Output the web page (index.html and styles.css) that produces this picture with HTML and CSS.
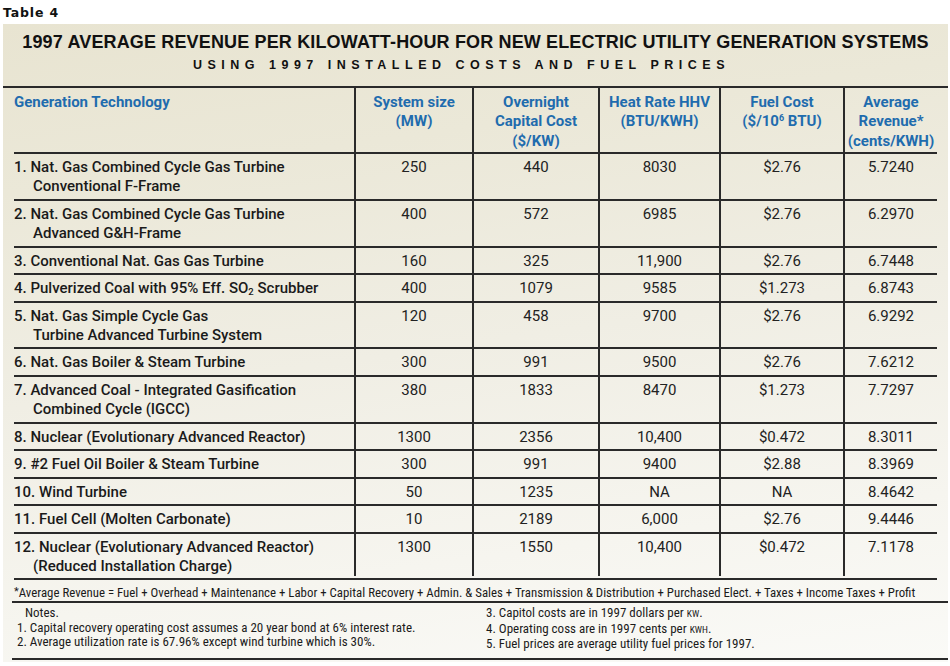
FILE: index.html
```html
<!DOCTYPE html>
<html>
<head>
<meta charset="utf-8">
<title>Table 4</title>
<link rel="stylesheet" href="styles.css">
</head>
<body>
<div class="label">Table 4</div>
<div class="panel">
  <h1 class="title">1997 AVERAGE REVENUE PER KILOWATT-HOUR FOR NEW ELECTRIC UTILITY GENERATION SYSTEMS</h1>
  <h2 class="subtitle">USING 1997 INSTALLED COSTS AND FUEL PRICES</h2>
  <div class="top-rule"></div>
  <div class="grid">
    <div class="row head">
      <div class="cell head-tech">Generation Technology</div>
      <div class="cell">System size<br>(MW)</div>
      <div class="cell">Overnight<br>Capital Cost<br>($/KW)</div>
      <div class="cell">Heat Rate HHV<br>(BTU/KWH)</div>
      <div class="cell">Fuel Cost<br>($/10<sup class="sup">6</sup> BTU)</div>
      <div class="cell">Average<br>Revenue*<br>(cents/KWH)</div>
    </div>
    <div class="row">
      <div class="cell tech">1. Nat. Gas Combined Cycle Gas Turbine<br>Conventional F-Frame</div>
      <div class="cell num">250</div><div class="cell num">440</div><div class="cell num">8030</div><div class="cell num">$2.76</div><div class="cell num">5.7240</div>
    </div>
    <div class="row">
      <div class="cell tech">2. Nat. Gas Combined Cycle Gas Turbine<br>Advanced G&amp;H-Frame</div>
      <div class="cell num">400</div><div class="cell num">572</div><div class="cell num">6985</div><div class="cell num">$2.76</div><div class="cell num">6.2970</div>
    </div>
    <div class="row">
      <div class="cell tech">3. Conventional Nat. Gas Gas Turbine</div>
      <div class="cell num">160</div><div class="cell num">325</div><div class="cell num">11,900</div><div class="cell num">$2.76</div><div class="cell num">6.7448</div>
    </div>
    <div class="row">
      <div class="cell tech">4. Pulverized Coal with 95% Eff. SO<sub class="sub">2</sub> Scrubber</div>
      <div class="cell num">400</div><div class="cell num">1079</div><div class="cell num">9585</div><div class="cell num">$1.273</div><div class="cell num">6.8743</div>
    </div>
    <div class="row">
      <div class="cell tech">5. Nat. Gas Simple Cycle Gas<br>Turbine Advanced Turbine System</div>
      <div class="cell num">120</div><div class="cell num">458</div><div class="cell num">9700</div><div class="cell num">$2.76</div><div class="cell num">6.9292</div>
    </div>
    <div class="row">
      <div class="cell tech">6. Nat. Gas Boiler &amp; Steam Turbine</div>
      <div class="cell num">300</div><div class="cell num">991</div><div class="cell num">9500</div><div class="cell num">$2.76</div><div class="cell num">7.6212</div>
    </div>
    <div class="row">
      <div class="cell tech">7. Advanced Coal - Integrated Gasification<br>Combined Cycle (IGCC)</div>
      <div class="cell num">380</div><div class="cell num">1833</div><div class="cell num">8470</div><div class="cell num">$1.273</div><div class="cell num">7.7297</div>
    </div>
    <div class="row">
      <div class="cell tech">8. Nuclear (Evolutionary Advanced Reactor)</div>
      <div class="cell num">1300</div><div class="cell num">2356</div><div class="cell num">10,400</div><div class="cell num">$0.472</div><div class="cell num">8.3011</div>
    </div>
    <div class="row">
      <div class="cell tech">9. #2 Fuel Oil Boiler &amp; Steam Turbine</div>
      <div class="cell num">300</div><div class="cell num">991</div><div class="cell num">9400</div><div class="cell num">$2.88</div><div class="cell num">8.3969</div>
    </div>
    <div class="row">
      <div class="cell tech">10. Wind Turbine</div>
      <div class="cell num">50</div><div class="cell num">1235</div><div class="cell num">NA</div><div class="cell num">NA</div><div class="cell num">8.4642</div>
    </div>
    <div class="row">
      <div class="cell tech">11. Fuel Cell (Molten Carbonate)</div>
      <div class="cell num">10</div><div class="cell num">2189</div><div class="cell num">6,000</div><div class="cell num">$2.76</div><div class="cell num">9.4446</div>
    </div>
    <div class="row last">
      <div class="cell tech">12. Nuclear (Evolutionary Advanced Reactor)<br>(Reduced Installation Charge)</div>
      <div class="cell num">1300</div><div class="cell num">1550</div><div class="cell num">10,400</div><div class="cell num">$0.472</div><div class="cell num">7.1178</div>
    </div>
  </div>
  <div class="end-rule"></div>
  <div class="foot"><span class="star">*</span>Average Revenue = Fuel + Overhead + Maintenance + Labor + Capital Recovery + Admin. &amp; Sales + Transmission &amp; Distribution + Purchased Elect. + Taxes + Income Taxes + Profit</div>
  <div class="notes">
    <div class="notes-col notes-left">
      <div class="notes-head">Notes.</div>
      <div>1. Capital recovery operating cost assumes a 20 year bond at 6% interest rate.</div>
      <div>2. Average utilization rate is 67.96% except wind turbine which is 30%.</div>
    </div>
    <div class="notes-col">
      <div>3. Capitol costs are in 1997 dollars per <span class="sc">KW</span>.</div>
      <div>4. Operating coss are in 1997 cents per <span class="sc">KWH</span>.</div>
      <div>5. Fuel prices are average utility fuel prices for 1997.</div>
    </div>
  </div>
</div>
</body>
</html>
```
FILE: styles.css
```css
* { box-sizing: border-box; }

html, body {
  margin: 0;
  padding: 0;
  background: #ffffff;
}

body {
  width: 950px;
  height: 666px;
  overflow: hidden;
  font-family: Roboto, "Liberation Sans", sans-serif;
  color: #1b1b1b;
}

.label {
  height: 24px;
  padding: 3px 0 0 3px;
  font: bold 12.5px/20px "DejaVu Sans", sans-serif;
  letter-spacing: 0.85px;
  color: #111;
}

.panel {
  margin-left: 3px;
  width: 945px;
  height: 638px;
  padding-top: 6.5px;
  background: linear-gradient(172deg, #e8e4d1 0%, #ebe8d8 22%, #f0eee4 50%, #f6f5ef 78%, #fafaf7 100%);
}

.title {
  margin: 0;
  font: bold 18px/22px "Liberation Sans", Arial, sans-serif;
  letter-spacing: 0.15px;
  text-align: center;
  color: #111;
  white-space: nowrap;
}

.subtitle {
  margin: 4.2px 0 0;
  padding-right: 28px;
  font: bold 12.5px/16px "Liberation Sans", Arial, sans-serif;
  letter-spacing: 5.5px;
  text-align: center;
  color: #111;
}

.top-rule {
  margin-top: 13.3px;
  height: 2px;
  background: #2a2a2a;
}

.grid {
  margin-left: 11px;
  width: 923px;
}

.row {
  display: grid;
  grid-template-columns: 340px 118px 126px 121px 124px 94px;
  border-bottom: 2px solid #2a2a2a;
}

.cell + .cell {
  border-left: 2px solid #2a2a2a;
}

.row .cell {
  padding: 4px 0 2.2px;
  font-size: 15px;
  line-height: 19.3px;
}

.head {
  height: 66px;
}

.head .cell {
  padding-top: 5px;
  font-weight: 700;
  line-height: 19.5px;
  color: #1f6cae;
  text-align: center;
}

.head .head-tech {
  text-align: left;
}

.row .tech {
  font-weight: 500;
  padding-left: 19px;
  text-indent: -19px;
  color: #1a1a1a;
}

.num {
  text-align: center;
  font-weight: 400;
  color: #222;
}

.row.last {
  border-bottom: none;
}

.row.last .cell {
  padding-bottom: 0;
}

.end-rule {
  margin: 2px 0 0 11px;
  width: 923px;
  height: 2px;
  background: #2a2a2a;
}

.sup {
  font-size: 9px;
  vertical-align: 5px;
  line-height: 0;
}

.sub {
  font-size: 9.5px;
  vertical-align: -2px;
  line-height: 0;
}

.foot {
  margin-left: 9px;
  width: 936px;
  padding: 1.5px 0 0 2px;
  height: 23px;
  border-bottom: 2px solid #2a2a2a;
  font-family: "Liberation Sans Narrow", "Roboto Condensed", "DejaVu Sans Condensed", Roboto, sans-serif;
  font-size: 12.85px;
  line-height: 19.5px;
  white-space: nowrap;
  color: #1b1b1b;
}

.star {
  vertical-align: 2px;
  font-size: 11px;
}

.notes {
  margin-left: 9px;
  width: 936px;
  display: grid;
  grid-template-columns: 474px 1fr;
  padding: 3px 0 6.5px;
  border-bottom: 2px solid #2a2a2a;
  font-family: "Liberation Sans Narrow", "Roboto Condensed", "DejaVu Sans Condensed", Roboto, sans-serif;
  font-size: 13px;
  line-height: 14.5px;
  color: #1b1b1b;
}

.notes-left {
  padding-left: 5px;
}

.notes-head {
  padding-left: 8px;
}

.sc {
  font-size: 9.5px;
}
```
